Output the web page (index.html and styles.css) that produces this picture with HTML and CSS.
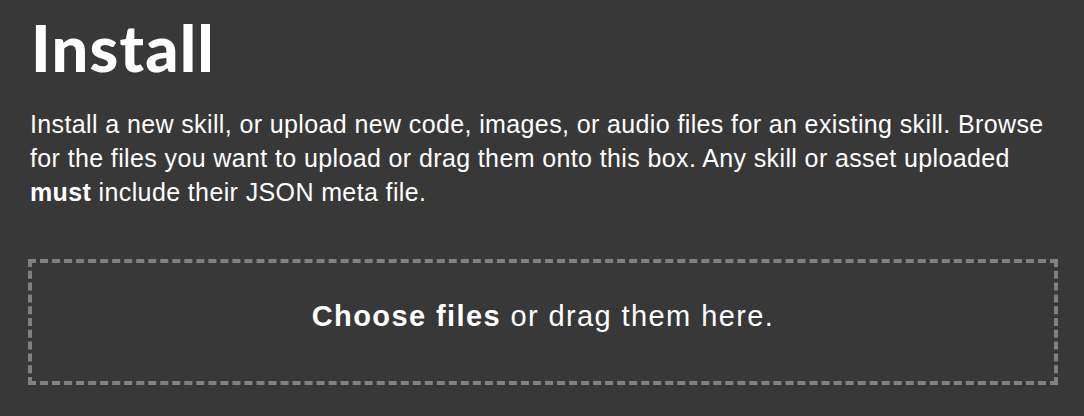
FILE: index.html
```html
<!DOCTYPE html>
<html>
<head>
<meta charset="utf-8">
<link rel="stylesheet" href="styles.css">
</head>
<body>
<main class="page">
  <h1 class="title">Install</h1>
  <p class="intro">Install a new skill, or upload new code, images, or audio files for an existing skill. Browse for the files you want to upload or drag them onto this box. Any skill or asset uploaded <strong>must</strong> include their JSON meta file.</p>
  <div class="dropzone">
    <span class="drop-text"><strong>Choose files</strong> or drag them here.</span>
  </div>
</main>
</body>
</html>
```
FILE: styles.css
```css
html, body {
  margin: 0;
  padding: 0;
  background: #383838;
}
.page {
  padding: 0 26px 0 28px;
  color: #ffffff;
}
.title {
  margin: 0;
  padding-top: 7px;
  padding-left: 3px;
  font-family: "Lato", sans-serif;
  font-weight: 900;
  font-size: 65px;
  line-height: 80px;
  letter-spacing: 1.2px;
}
.intro {
  margin: 20px 0 0 2px;
  font-family: "Liberation Sans", Arial, sans-serif;
  font-size: 25px;
  line-height: 34px;
  letter-spacing: 0.38px;
}
.dropzone {
  margin-top: 50px;
  height: 126px;
  box-sizing: border-box;
  border: 4px dashed #808080;
  padding-bottom: 12px;
  display: flex;
  align-items: center;
  justify-content: center;
}
.drop-text {
  font-family: "Liberation Sans", Arial, sans-serif;
  font-size: 29px;
  letter-spacing: 1.4px;
}
```
